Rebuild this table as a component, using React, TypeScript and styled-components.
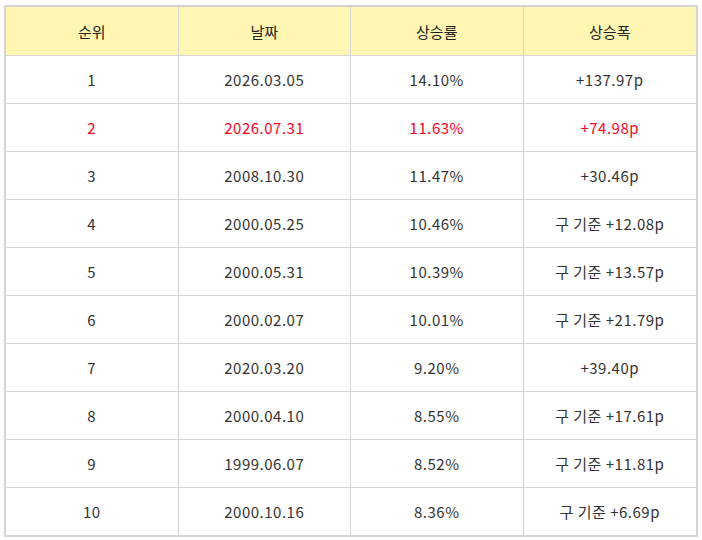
import React from 'react';
import styled, { createGlobalStyle } from 'styled-components';

const GlobalStyle = createGlobalStyle`
  body {
    margin: 0;
    background: #fff;
    font-family: "Noto Sans CJK KR", "Noto Sans", sans-serif;
  }
`;

const Wrapper = styled.div`
  padding: 5px 4px;
`;

const Table = styled.table`
  width: 694px;
  border-collapse: separate;
  border-spacing: 0;
  border: 2px solid #d4d4d4;
  table-layout: fixed;
  font-size: 15px;
  letter-spacing: 0.5px;
`;

const HeadCell = styled.th`
  height: 48px;
  padding: 0;
  background: #fff6b3;
  color: #222;
  font-weight: 400;
  text-align: center;
  letter-spacing: 0;
  border-right: 1px solid #d4d4d4;
  border-bottom: 1px solid #d4d4d4;

  &:last-child {
    border-right: none;
  }
`;

const Row = styled.tr<{ $highlight?: boolean }>`
  color: ${p => (p.$highlight ? '#ff0019' : '#333')};

  &:last-child td {
    border-bottom: none;
  }
`;

const Cell = styled.td`
  height: 47px;
  padding: 0;
  text-align: center;
  border-right: 1px solid #d4d4d4;
  border-bottom: 1px solid #d4d4d4;

  &:last-child {
    border-right: none;
  }
`;

interface Rank {
  rank: number;
  date: string;
  rate: string;
  gain: string;
}

const rows: Rank[] = [
  { rank: 1, date: '2026.03.05', rate: '14.10%', gain: '+137.97p' },
  { rank: 2, date: '2026.07.31', rate: '11.63%', gain: '+74.98p' },
  { rank: 3, date: '2008.10.30', rate: '11.47%', gain: '+30.46p' },
  { rank: 4, date: '2000.05.25', rate: '10.46%', gain: '구 기준 +12.08p' },
  { rank: 5, date: '2000.05.31', rate: '10.39%', gain: '구 기준 +13.57p' },
  { rank: 6, date: '2000.02.07', rate: '10.01%', gain: '구 기준 +21.79p' },
  { rank: 7, date: '2020.03.20', rate: '9.20%', gain: '+39.40p' },
  { rank: 8, date: '2000.04.10', rate: '8.55%', gain: '구 기준 +17.61p' },
  { rank: 9, date: '1999.06.07', rate: '8.52%', gain: '구 기준 +11.81p' },
  { rank: 10, date: '2000.10.16', rate: '8.36%', gain: '구 기준 +6.69p' },
];

const App: React.FC = () => {
  return (
    <Wrapper>
      <GlobalStyle />
      <Table>
        <thead>
          <tr>
            <HeadCell>순위</HeadCell>
            <HeadCell>날짜</HeadCell>
            <HeadCell>상승률</HeadCell>
            <HeadCell>상승폭</HeadCell>
          </tr>
        </thead>
        <tbody>
          {rows.map(r => (
            <Row key={r.rank} $highlight={r.rank === 2}>
              <Cell>{r.rank}</Cell>
              <Cell>{r.date}</Cell>
              <Cell>{r.rate}</Cell>
              <Cell>{r.gain}</Cell>
            </Row>
          ))}
        </tbody>
      </Table>
    </Wrapper>
  );
};

export default App;
